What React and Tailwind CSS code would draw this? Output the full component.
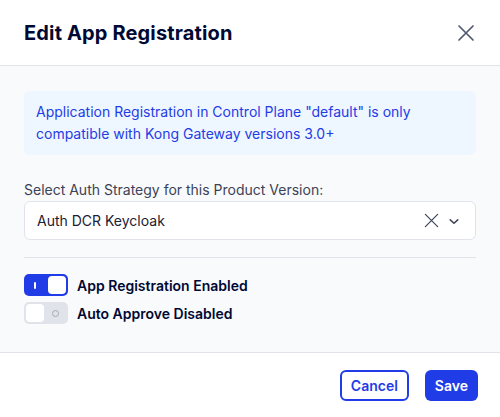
import React from "react";

function XIcon({ className, sw = 2 }) {
  return (
    <svg viewBox="0 0 24 24" fill="none" stroke="currentColor" strokeWidth={sw} strokeLinecap="round" className={className}>
      <path d="M5 5L19 19M19 5L5 19" />
    </svg>
  );
}

export default function App() {
  return (
    <div className="w-[500px] h-[417px] bg-white flex flex-col text-[#000933]" style={{ fontFamily: "Inter, 'Noto Sans', sans-serif" }}>
      <div className="h-[66px] shrink-0 flex items-center justify-between pl-6 pr-[22px] border-b border-[#e0e4ea]">
        <h1 className="text-[20px] font-bold leading-none tracking-[0.15px]">Edit App Registration</h1>
        <XIcon className="w-6 h-6 text-[#52596e]" sw={1.7} />
      </div>
      <div className="flex-1 bg-[#f9fafb] px-6 pt-[25px] flex flex-col border-b border-[#e0e4ea]">
        <div className="bg-[#eef6ff] rounded-md px-3 h-[64px] flex items-center text-[14px] leading-[22px] text-[#1f3ce6]">
          Application Registration in Control Plane "default" is only compatible with Kong Gateway versions 3.0+
        </div>
        <div className="mt-[25px] text-[14px] leading-[20px] text-[#3c4257]">Select Auth Strategy for this Product Version:</div>
        <div className="mt-[1px] h-[39px] bg-white border border-[#e0e4ea] rounded-md flex items-center pl-3 pr-[12px]">
          <span className="flex-1 text-[14px] text-[#1c2033]">Auth DCR Keycloak</span>
          <XIcon className="w-[21px] h-[21px] text-[#3c4257]" sw={1.4} />
          <svg viewBox="0 0 24 24" fill="none" stroke="currentColor" strokeWidth="2" strokeLinecap="round" strokeLinejoin="round" className="w-[18px] h-[18px] ml-[3px] text-[#3c4257]">
            <path d="M7 10.5l5 4.5 5-4.5" />
          </svg>
        </div>
        <div className="mt-[17px] h-px bg-[#e0e4ea]" />
        <div className="mt-[16px] flex items-center gap-[9px]">
          <div className="w-[44px] h-[22px] rounded-[5px] bg-[#1f3ce6] flex items-center justify-between pl-[10px] pr-[2px]">
            <div className="w-[2px] h-[7px] bg-white rounded-full" />
            <div className="w-[18px] h-[18px] bg-white rounded-[4px]" />
          </div>
          <span className="text-[14px] font-semibold">App Registration Enabled</span>
        </div>
        <div className="mt-[6px] flex items-center gap-[9px]">
          <div className="w-[44px] h-[22px] rounded-[5px] bg-[#e0e4ea] flex items-center justify-between pl-[2px] pr-[9px]">
            <div className="w-[18px] h-[18px] bg-white rounded-[4px]" />
            <div className="w-[7px] h-[7px] rounded-full border-[1.5px] border-[#a3a9b8]" />
          </div>
          <span className="text-[14px] font-semibold">Auto Approve Disabled</span>
        </div>
      </div>
      <div className="h-[64px] shrink-0 flex items-center justify-end pr-[22px] gap-4">
        <button className="h-[31px] px-[9px] rounded-md border-2 border-[#1f3ce6] text-[#1f3ce6] text-[14px] font-semibold bg-white">Cancel</button>
        <button className="h-[31px] px-[10px] rounded-md bg-[#1f3ce6] text-white text-[14px] font-semibold">Save</button>
      </div>
    </div>
  );
}
